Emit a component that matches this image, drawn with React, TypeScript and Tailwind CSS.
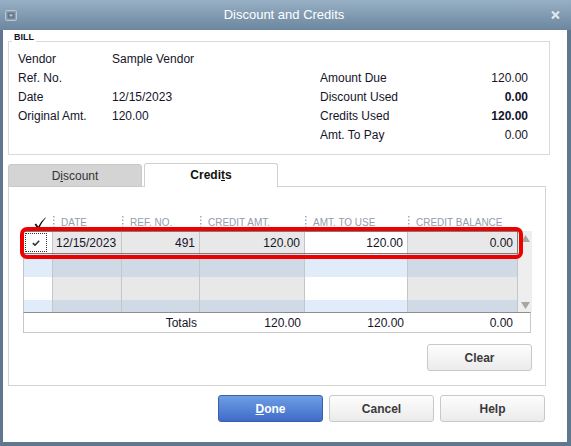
import type { ReactNode } from 'react';

// column widths of the credits grid (px) — check, date, ref, credit, to use, balance
const COLS = [30, 69, 78, 105, 103, 110];

const HEADERS = ['DATE', 'REF. NO.', 'CREDIT AMT.', 'AMT. TO USE', 'CREDIT BALANCE'];

function Dots() {
  return (
    <svg width="2" height="12" viewBox="0 0 2 12" className="shrink-0">
      <rect x="0" y="0" width="1.5" height="1.5" fill="#a3a9b4" />
      <rect x="0" y="3.5" width="1.5" height="1.5" fill="#a3a9b4" />
      <rect x="0" y="7" width="1.5" height="1.5" fill="#a3a9b4" />
      <rect x="0" y="10.5" width="1.5" height="1.5" fill="#a3a9b4" />
    </svg>
  );
}

function TitleBar() {
  return (
    <div className="flex h-[30px] items-center bg-gradient-to-b from-[#97b0c5] to-[#6b869e] pl-[5px] pr-[11px]">
      <svg width="12" height="11" viewBox="0 0 12 11">
        <rect x="0.5" y="0.5" width="11" height="10" rx="1" fill="#8aa0b3" stroke="#b8c6d2" />
        <rect x="2.5" y="2.5" width="7" height="6" fill="#66798b" />
        <path d="M4 4.5h4L6 7z" fill="#c9d3dc" />
      </svg>
      <div className="flex-1 text-center text-[13px] text-white">Discount and Credits</div>
      <svg width="9" height="8" viewBox="0 0 9 8">
        <path d="M1 0.5l7 7M8 0.5l-7 7" stroke="#e2e7ec" strokeWidth="2.2" />
      </svg>
    </div>
  );
}

function Line({ label, value, bold }: { label: string; value: string; bold?: boolean }) {
  return (
    <div className="flex h-[19px] items-center">
      <span className="flex-1">{label}</span>
      <span className={bold ? 'font-bold' : ''}>{value}</span>
    </div>
  );
}

function BillBox() {
  return (
    <div className="relative ml-[5px] mt-[11px] h-[114px] w-[542px] border border-[#dadada]">
      <span className="absolute left-[3px] top-[-10px] bg-white px-[2px] text-[9px] font-bold leading-[10px]">
        BILL
      </span>
      <div className="flex pl-[9px] pt-[7px]">
        <div className="w-[302px]">
          {[
            ['Vendor', 'Sample Vendor'],
            ['Ref. No.', ''],
            ['Date', '12/15/2023'],
            ['Original Amt.', '120.00'],
          ].map(([l, v]) => (
            <div key={l} className="flex h-[19px] items-center">
              <span className="w-[94px]">{l}</span>
              <span>{v}</span>
            </div>
          ))}
        </div>
        <div className="w-[208px] pt-[19px]">
          <Line label="Amount Due" value="120.00" />
          <Line label="Discount Used" value="0.00" bold />
          <Line label="Credits Used" value="120.00" bold />
          <Line label="Amt. To Pay" value="0.00" />
        </div>
      </div>
    </div>
  );
}

function Tabs() {
  return (
    <div className="relative z-10 -mb-px ml-[5px] mt-[8px] flex h-[24px] items-end gap-[2px]">
      <div className="flex h-[23px] w-[134px] items-center justify-center rounded-t-[3px] border border-[#c9c9c9] bg-[#d4d4d4] text-[#333]">
        D<u>i</u>scount
      </div>
      <div className="flex h-[24px] w-[134px] items-center justify-center rounded-t-[3px] border-x border-t border-[#d0d0d0] bg-white pb-px font-bold text-[#111]">
        Credi<u>t</u>s
      </div>
    </div>
  );
}

function Cell({ w, bg, children, right, first }: { w: number; bg: string; children?: ReactNode; right?: boolean; first?: boolean }) {
  return (
    <div
      className={`flex h-full shrink-0 items-center border-r border-[#c6c6c6] ${right ? 'justify-end pr-[4px]' : 'pl-[3px]'} ${bg}`}
      style={{ width: first ? w - 1 : w }}
    >
      {children}
    </div>
  );
}

function BlankRow({ blue }: { blue: boolean }) {
  const light = blue ? 'bg-[#e1ecfb]' : 'bg-white';
  const dark = blue ? 'bg-[#cfdae6]' : 'bg-[#e8e8e8]';
  return (
    <div className="flex h-[23px] shrink-0">
      <Cell w={COLS[0]} bg={light} first />
      <Cell w={COLS[1]} bg={dark} />
      <Cell w={COLS[2]} bg={dark} />
      <Cell w={COLS[3]} bg={dark} />
      <Cell w={COLS[4]} bg={light} />
      <Cell w={COLS[5]} bg={dark} />
    </div>
  );
}

function Grid() {
  return (
    <div className="w-[509px]">
      {/* header */}
      <div className="flex h-[18px] items-center text-[10px] text-[#949bab]">
        <div className="flex w-[30px] justify-center pl-[4px] pt-[2px]">
          <svg width="12" height="13" viewBox="0 0 12 13">
            <path d="M0.6 7.6L2 6.6L4.3 9.6Q7 4 11.4 0.4L11.8 0.9Q7.6 5.2 4.7 12.6L4 12.6Z" fill="#111" />
          </svg>
        </div>
        {HEADERS.map((h, i) => (
          <div key={h} className="flex items-center gap-[6px]" style={{ width: COLS[i + 1] }}>
            <Dots />
            <span className="whitespace-nowrap">{h}</span>
          </div>
        ))}
      </div>

      {/* body */}
      <div className="relative flex h-[81px]">
        <div className="flex w-[495px] flex-col overflow-hidden border-l border-[#c6c6c6]">
          <div className="flex h-[23px] shrink-0">
            <Cell w={COLS[0]} bg="bg-white" first>
              <div className="-ml-[2px] flex h-[19px] w-[22px] items-center justify-center border border-dotted border-[#333]">
                <svg width="8" height="6" viewBox="0 0 8 6">
                  <path d="M0.8 3.2l2.2 2L7.2 0.8" fill="none" stroke="#333" strokeWidth="1.6" />
                </svg>
              </div>
            </Cell>
            <Cell w={COLS[1]} bg="bg-[#e8e8e8]">12/15/2023</Cell>
            <Cell w={COLS[2]} bg="bg-[#e8e8e8]" right>491</Cell>
            <Cell w={COLS[3]} bg="bg-[#e8e8e8]" right>120.00</Cell>
            <Cell w={COLS[4]} bg="bg-white" right>120.00</Cell>
            <Cell w={COLS[5]} bg="bg-[#e8e8e8]" right>0.00</Cell>
          </div>
          <BlankRow blue />
          <BlankRow blue={false} />
          <BlankRow blue />
        </div>
        <div className="flex w-[14px] flex-col justify-between bg-[#eeeeee]">
          <div className="flex h-[14px] items-center justify-center">
            <svg width="9" height="7" viewBox="0 0 9 7"><path d="M4.5 0L9 7H0z" fill="#a6a6a6" /></svg>
          </div>
          <div className="flex h-[14px] items-center justify-center">
            <svg width="9" height="7" viewBox="0 0 9 7"><path d="M0 0h9L4.5 7z" fill="#a6a6a6" /></svg>
          </div>
        </div>
        {/* selected row outline */}
        <div className="pointer-events-none absolute left-0 top-0 h-[23px] w-[495px] border border-[#7b7b7b]" />
        {/* red annotation */}
        <div className="pointer-events-none absolute left-[-3px] top-[-4px] h-[32px] w-[503px] rounded-[7px] border-[4px] border-[#ee0000]" />
      </div>

      {/* totals */}
      <div className="flex h-[21px] w-[508px] items-center border border-[#c8c8c8] border-t-[#8e8e8e]">
        <div className="w-[176px] pr-[3px] text-right">Totals</div>
        <div className="w-[105px] pr-[4px] text-right">120.00</div>
        <div className="w-[103px] pr-[4px] text-right">120.00</div>
        <div className="w-[110px] pr-[5px] text-right">0.00</div>
      </div>
    </div>
  );
}

function Btn({ children, primary }: { children: ReactNode; primary?: boolean }) {
  return (
    <button
      className={
        primary
          ? 'h-[27px] w-[105px] rounded-[3px] border border-[#3a5fa6] bg-gradient-to-b from-[#6e9ee2] to-[#3f6ccb] font-bold text-white'
          : 'h-[27px] w-[105px] rounded-[3px] border border-[#c9c9c9] bg-gradient-to-b from-[#fdfdfd] to-[#ebebeb] font-bold text-[#3a3a3a]'
      }
    >
      {children}
    </button>
  );
}

export default function App() {
  return (
    <div className="flex h-[446px] w-[571px] flex-col bg-[#5f788f] font-['Liberation_Sans',Arial,sans-serif] text-[12px] text-[#14142a]">
      <TitleBar />
      <div className="mb-[4px] ml-[3px] mr-[4px] flex-1 bg-white">
        <BillBox />
        <Tabs />
        <div className="ml-[5px] h-[200px] w-[538px] border border-[#d3d3d3] pl-[14px] pt-[26px]">
          <Grid />
          <div className="mt-[11px] flex w-[509px] justify-end">
            <Btn>Clear</Btn>
          </div>
        </div>
        <div className="mt-[9px] flex gap-[6px] pl-[215px]">
          <Btn primary>
            <u>D</u>one
          </Btn>
          <Btn>Cancel</Btn>
          <Btn>Help</Btn>
        </div>
      </div>
    </div>
  );
}
